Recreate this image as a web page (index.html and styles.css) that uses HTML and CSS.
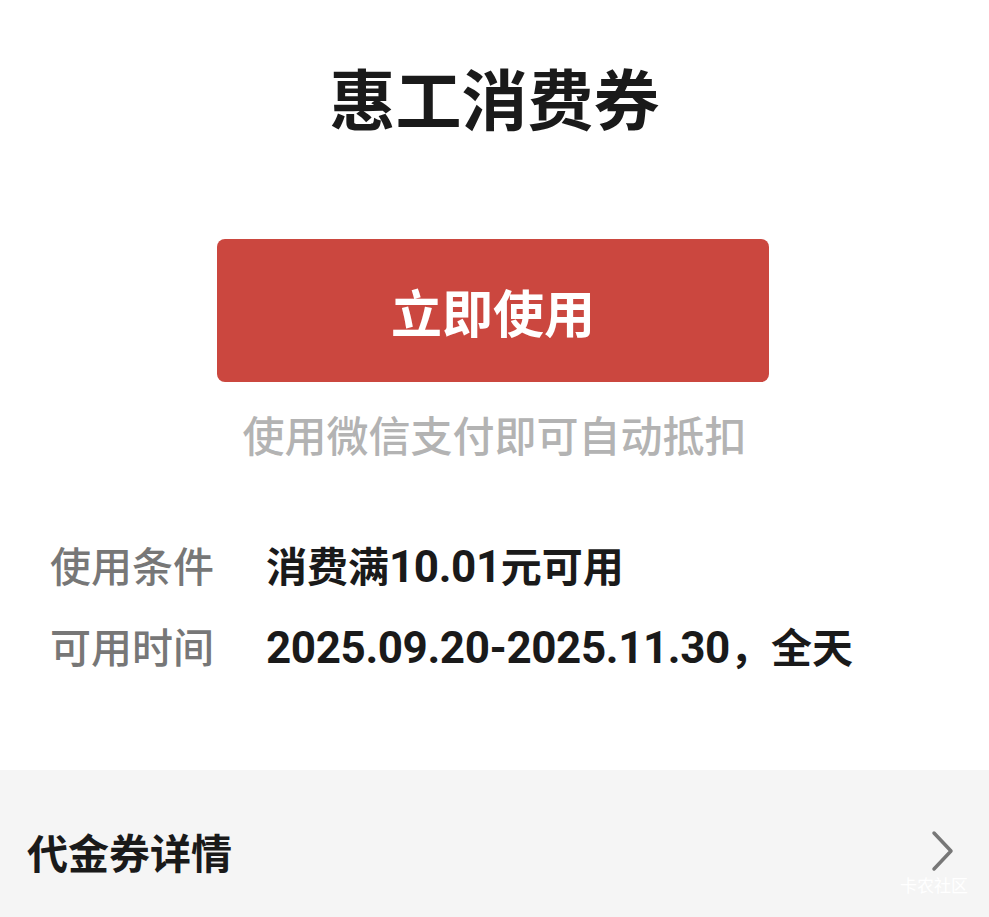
FILE: index.html
```html
<!DOCTYPE html>
<html lang="zh-CN">
<head>
  <meta charset="UTF-8">
  <title>惠工消费券</title>
  <link rel="stylesheet" href="styles.css">
</head>
<body>

  <div class="coupon">
    <h1 class="coupon-title">惠工消费券</h1>

    <div class="btn-container">
      <button class="use-btn">立即使用</button>
    </div>
    <div class="tip">使用微信支付即可自动抵扣</div>

    <div class="info">
      <div class="info-row">
        <span class="info-label">使用条件</span>
        <span class="info-value">消费满<span class="num">10.01</span>元可用</span>
      </div>
      <div class="info-row">
        <span class="info-label">可用时间</span>
        <span class="info-value"><span class="num">2025.09.20-2025.11.30</span>，全天</span>
      </div>
    </div>
  </div>

  <!-- details entry -->
  <div class="detail-bar">
    <span class="detail-title">代金券详情</span>
    <svg class="chevron" width="26" height="42" viewBox="0 0 26 42">
      <path d="M4 3 L21 21 L4 39" fill="none" stroke="#777" stroke-width="3.5" stroke-linecap="round" stroke-linejoin="round"/>
    </svg>
    <span class="watermark">卡农社区</span>
  </div>

</body>
</html>
```

FILE: styles.css
```css
* {
  box-sizing: border-box;
  font-family: Roboto, 'Noto Sans CJK SC', sans-serif;
}

body {
  margin: 0;
  padding: 0;
  background-color: white;
}

.coupon {
  padding-top: 62px;
  height: 770px;
}

.coupon-title {
  margin: 0;
  text-align: center;
  font-size: 66px;
  line-height: 82px;
  font-weight: 700;
  color: #1a1a1a;
}

.btn-container {
  display: flex;
  justify-content: center;
  margin-top: 95px;
}

.use-btn {
  width: 552px;
  height: 143px;
  margin-right: 3px;
  border: none;
  border-radius: 8px;
  background-color: #cb473f;
  color: white;
  font-size: 51px;
  font-weight: 700;
  cursor: pointer;
}

.tip {
  text-align: center;
  margin-top: 28px;
  font-size: 42px;
  line-height: 56px;
  font-weight: 500;
  color: #b3b3b3;
}

.info {
  margin-top: 57px;
  padding-left: 50px;
}

.info-row {
  display: flex;
  align-items: center;
  height: 81px;
}

.info-label {
  width: 216px;
  font-size: 41px;
  font-weight: 500;
  color: #777;
}

.info-value {
  font-size: 41px;
  font-weight: 700;
  color: #1a1a1a;
}

.num {
  font-size: 44px;
  letter-spacing: -0.4px;
}

.detail-bar {
  position: relative;
  height: 147px;
  background-color: #f5f5f5;
  display: flex;
  align-items: center;
  justify-content: space-between;
  padding: 14px 33px 0 27px;
}

.detail-title {
  font-size: 41px;
  font-weight: 700;
  color: #1a1a1a;
}

.watermark {
  position: absolute;
  right: 21px;
  bottom: 20px;
  font-size: 17px;
  color: #fff;
}
```
